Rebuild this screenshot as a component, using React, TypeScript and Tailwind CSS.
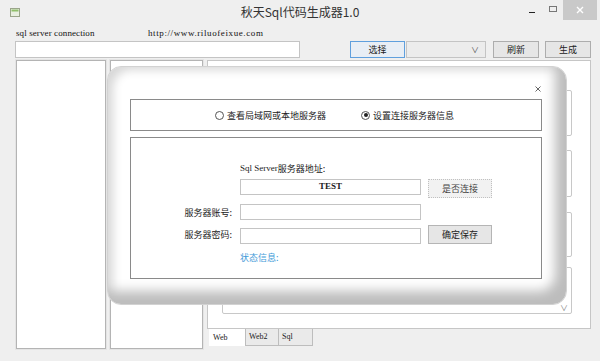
import React from "react";

const serif = "font-['Liberation_Serif','Noto_Sans_CJK_SC',serif]";

const Radio = ({ checked, label }: { checked?: boolean; label: string }) => (
  <div className="flex items-center gap-[3px]">
    <span className="flex h-[9px] w-[9px] items-center justify-center rounded-full border border-[#555] bg-white">
      {checked && <span className="h-[4px] w-[4px] rounded-full bg-[#222]" />}
    </span>
    <span className="text-[9px] leading-none">{label}</span>
  </div>
);

const Btn = ({ children, className = "" }: { children: React.ReactNode; className?: string }) => (
  <div
    className={
      "flex items-center justify-center border bg-[#e6e6e6] text-[9px] leading-none text-[#222] " +
      className
    }
  >
    {children}
  </div>
);

const App = () => {
  return (
    <div className="relative h-[361px] w-[600px] overflow-hidden bg-[#efefef] font-['Noto_Sans_CJK_SC',sans-serif] text-[#222]">
      {/* title bar */}
      <div className="grid h-[28px] grid-cols-[1fr_auto_1fr] items-start">
        <div className="pl-[10px] pt-[8px]">
          <svg width="10" height="9" viewBox="0 0 10 9">
            <rect x="0.5" y="0.5" width="9" height="8" fill="#e8efe0" stroke="#9aa58a" />
            <rect x="1.5" y="1.5" width="7" height="2" fill="#8fbf6a" />
          </svg>
        </div>
        <div className="pt-[4px] text-[12px] leading-[16px] text-[#333]">秋天Sql代码生成器1.0</div>
        <div className="flex items-start justify-end pr-[3px]">
          <div className="mr-[14px] mt-[12px] h-[1px] w-[6px] bg-[#222]" />
          <div className="mr-[6px] mt-[6px] h-[6px] w-[8px] border border-[#777]" />
          <div className="flex h-[20px] w-[34px] items-center justify-center bg-[#c9c9c9]">
            <svg width="8" height="8" viewBox="0 0 8 8">
              <path d="M1 1 L7 7 M7 1 L1 7" stroke="#fff" strokeWidth="1.4" />
            </svg>
          </div>
        </div>
      </div>

      {/* labels */}
      <div className={"flex h-[11px] items-center pl-[16px] text-[9px] leading-none tracking-[0.1px] text-[#111] " + serif}>
        <span className="w-[132px]">sql server connection</span>
        <span className="tracking-[0.6px]">http://www.riluofeixue.com</span>
      </div>

      {/* toolbar */}
      <div className="mt-[2px] flex h-[17px] items-stretch pl-[15px]">
        <div className="w-[285px] border border-[#c4c4c4] bg-white" />
        <Btn className="ml-[50px] w-[55px] border-[#5f9fdd] bg-[#e8eef5]">选择</Btn>
        <div className="ml-[1px] flex w-[80px] items-center justify-end border border-[#c4c4c4] bg-[#ececec] pr-[6px] text-[8px] text-[#555]">
          ∨
        </div>
        <Btn className="ml-[7px] w-[46px] border-[#adadad]">刷新</Btn>
        <Btn className="ml-[6px] w-[46px] border-[#adadad]">生成</Btn>
      </div>

      {/* main area */}
      <div className="mt-[2px] flex h-[289px] pl-[16px]">
        <div className="w-[90px] border border-[#b4b4b4] bg-white shadow-[0_0_0_1px_#e4e4e4]" />
        <div className="ml-[4px] w-[93px] border border-[#b4b4b4] bg-white shadow-[0_0_0_1px_#e4e4e4]" />
        <div className="ml-[4px] flex w-[384px] flex-col">
          <div className="flex h-[269px] flex-col border border-[#c6c6c6] bg-white pl-[14px] pr-[18px] pt-[29px]">
            <div className="h-[46px] rounded-[2px] border border-[#c8c8c8]" />
            <div className="mt-[14px] h-[47px] rounded-[2px] border border-[#c8c8c8]" />
            <div className="mt-[15px] h-[45px] rounded-[2px] border border-[#c8c8c8]" />
            <div className="mt-[10px] flex h-[47px] items-end justify-end rounded-[2px] border border-[#c8c8c8] pb-[1px] pr-[3px] text-[8px] leading-none text-[#888]">
              ∨
            </div>
          </div>
          <div className={"flex h-[17px] pl-[2px] text-[8px] leading-none " + serif}>
            <div className="flex w-[36px] items-center bg-white pl-[4px]">Web</div>
            <div className="flex w-[34px] items-center border-b border-l border-r border-[#bdbdbd] bg-[#eaeaea] pl-[3px]">
              Web2
            </div>
            <div className="flex w-[34px] items-center border-b border-r border-[#bdbdbd] bg-[#eaeaea] pl-[3px]">
              Sql
            </div>
          </div>
        </div>
      </div>

      {/* dialog */}
      <div className="absolute left-[107px] top-[66px] h-[239px] w-[460px] rounded-[14px] border border-[#d2d2d2] bg-white pl-[22px] pt-[32px] shadow-[inset_-14px_-16px_12px_-3px_#bdbdbd,inset_10px_8px_10px_-5px_#d8d8d8]">
        <svg className="absolute left-[427px] top-[19px]" width="6" height="6" viewBox="0 0 6 6">
          <path d="M0.5 0.5 L5.5 5.5 M5.5 0.5 L0.5 5.5" stroke="#666" strokeWidth="1" />
        </svg>

        <div className="flex h-[32px] w-[412px] items-center gap-[35px] border border-[#8a8a8a] pl-[84px] shadow-[inset_1px_1px_0_#fff]">
          <Radio label="查看局域网或本地服务器" />
          <Radio checked label="设置连接服务器信息" />
        </div>

        <div className="mt-[6px] flex h-[142px] w-[412px] flex-col border border-[#8a8a8a] pl-[109px]">
          <div className="mt-[23px] flex h-[14px] items-center text-[9px] leading-none">
            <span className={serif}>Sql Server</span>
            <span>服务器地址:</span>
          </div>
          <div className="mt-[4px] flex h-[19px] items-start">
            <div className={"flex h-[16px] w-[181px] items-center justify-center border border-[#c4c4c4] bg-white text-[9px] font-bold " + serif}>
              TEST
            </div>
            <Btn className="ml-[7px] h-[19px] w-[64px] border-dotted border-[#c0c0c0] bg-[#f2f2f2] text-[#444]">
              是否连接
            </Btn>
          </div>
          <div className="relative mt-[6px] flex h-[16px] items-center">
            <span className="absolute right-full mr-[8px] whitespace-nowrap text-[9px] leading-none">服务器账号:</span>
            <div className="h-[16px] w-[181px] border border-[#c4c4c4] bg-white" />
          </div>
          <div className="relative mt-[5px] flex h-[19px] items-start">
            <span className="absolute right-full top-[5px] mr-[8px] whitespace-nowrap text-[9px] leading-none">服务器密码:</span>
            <div className="mt-[3px] h-[16px] w-[181px] border border-[#c4c4c4] bg-white" />
            <Btn className="ml-[7px] h-[19px] w-[64px] border-[#b5b5b5]">确定保存</Btn>
          </div>
          <div className="mt-[8px] text-[9px] leading-[12px] text-[#3f9ad8]">状态信息:</div>
        </div>
      </div>
    </div>
  );
};

export default App;
